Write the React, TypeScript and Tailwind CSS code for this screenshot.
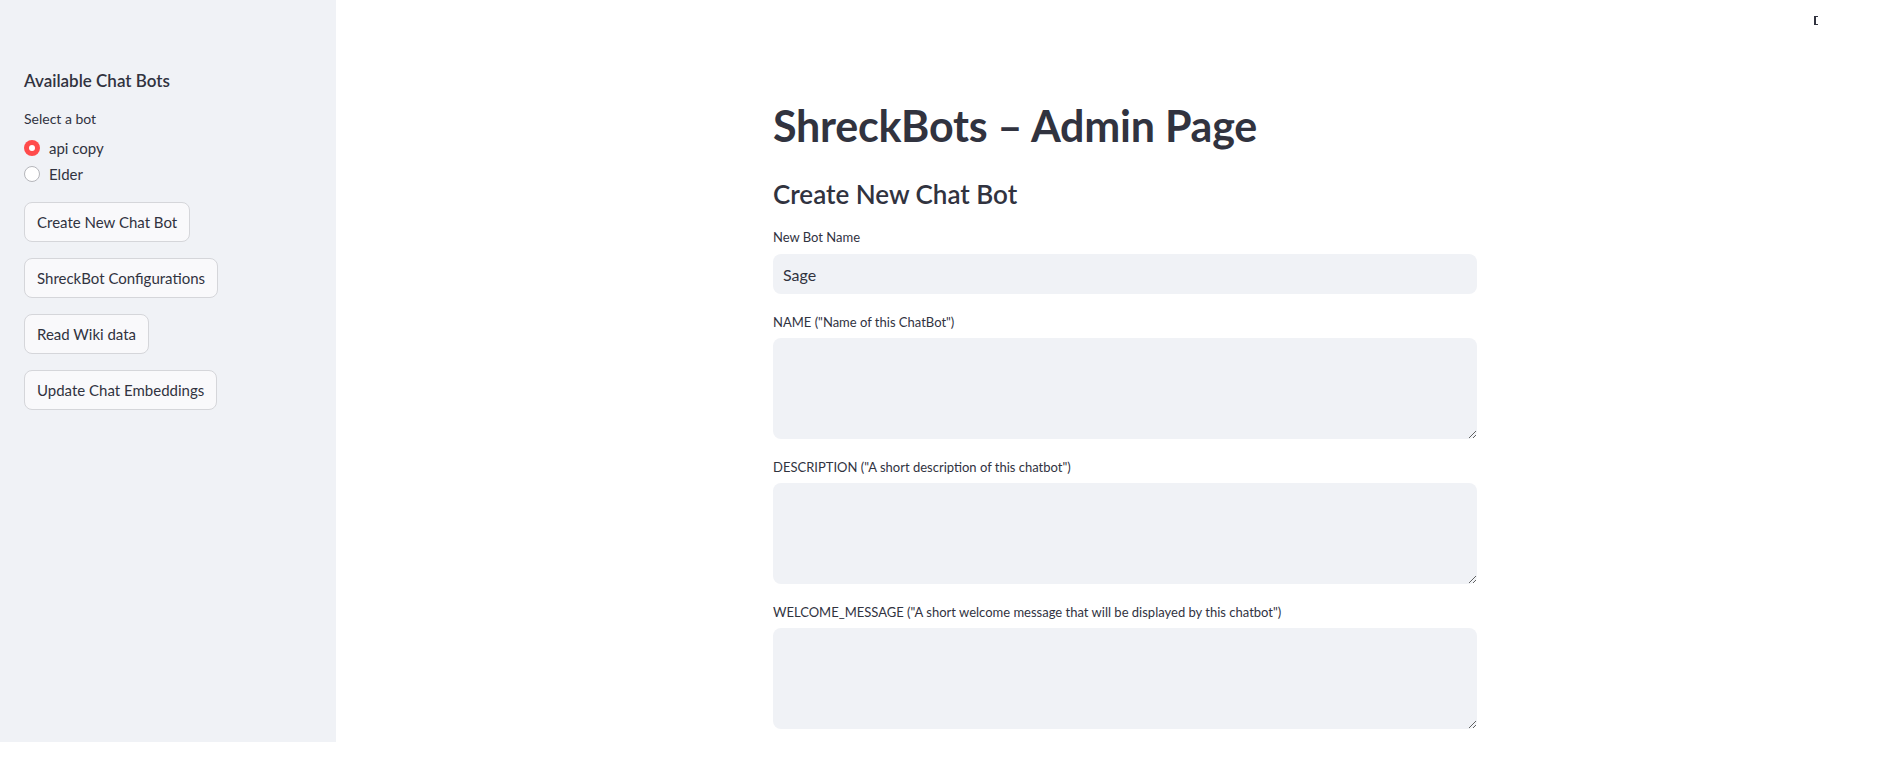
import React from "react";

const fields = [
  { label: 'NAME ("Name of this ChatBot")' },
  { label: 'DESCRIPTION ("A short description of this chatbot")' },
  { label: 'WELCOME_MESSAGE ("A short welcome message that will be displayed by this chatbot")' },
];

const buttons = [
  "Create New Chat Bot",
  "ShreckBot Configurations",
  "Read Wiki data",
  "Update Chat Embeddings",
];

export default function App() {
  return (
    <div className="relative flex w-[1899px] h-[771px] bg-white font-['Lato',sans-serif] text-[#31333F] overflow-hidden">
      {/* Sidebar */}
      <aside className="w-[336px] h-[742px] shrink-0 bg-[#F0F2F6] px-6 pt-[69px]">
        <h3 className="text-[17px] leading-[24px] font-semibold">Available Chat Bots</h3>
        <div className="mt-[15px] text-[14px] leading-[21px]">Select a bot</div>
        <div className="mt-[6px] flex flex-col">
          <label className="flex items-center h-[26px] gap-[9px]">
            <span className="w-4 h-4 rounded-full bg-[#FF4B4B] flex items-center justify-center">
              <span className="w-[6px] h-[6px] rounded-full bg-white" />
            </span>
            <span className="text-[15px] leading-[24px]">api copy</span>
          </label>
          <label className="flex items-center h-[26px] gap-[9px]">
            <span className="w-4 h-4 rounded-full bg-white border border-[#b5b6bb]" />
            <span className="text-[15px] leading-[24px]">Elder</span>
          </label>
        </div>
        <div className="mt-[15px] flex flex-col items-start gap-4">
          {buttons.map((b) => (
            <button
              key={b}
              className="h-10 px-3 rounded-lg border border-[#d5d6da] bg-[#F9F9FB] text-[15px] leading-[24px] text-[#31333F]"
            >
              {b}
            </button>
          ))}
        </div>
      </aside>

      {/* Main */}
      <main className="flex-1 flex justify-center pl-[15px]">
        <div className="w-[704px] pt-[99px]">
          <h1 className="text-[43px] leading-[53px] font-bold tracking-[-0.25px]">ShreckBots – Admin Page</h1>
          <h2 className="mt-[26px] text-[26px] leading-[33px] font-semibold">Create New Chat Bot</h2>

          <div className="mt-[16px]">
            <div className="text-[13px] leading-[21px] h-[21px]">New Bot Name</div>
            <input
              defaultValue="Sage"
              className="mt-[6px] w-full h-10 rounded-lg bg-[#F0F2F6] px-[10px] text-[16px] text-[#31333F] outline-none"
            />
          </div>

          {fields.map((f) => (
            <div key={f.label} className="mt-[18px]">
              <div className="text-[13px] leading-[21px] h-[21px]">{f.label}</div>
              <textarea className="mt-[5px] block w-full h-[101px] rounded-lg bg-[#F0F2F6] px-[10px] py-2 text-[16px] outline-none" />
            </div>
          ))}
        </div>
      </main>

      {/* top-right tiny icon */}
      <div className="absolute left-[1814px] top-[16px] w-[4px] h-[9px] border-l-2 border-y border-[#31333F]" />
    </div>
  );
}
